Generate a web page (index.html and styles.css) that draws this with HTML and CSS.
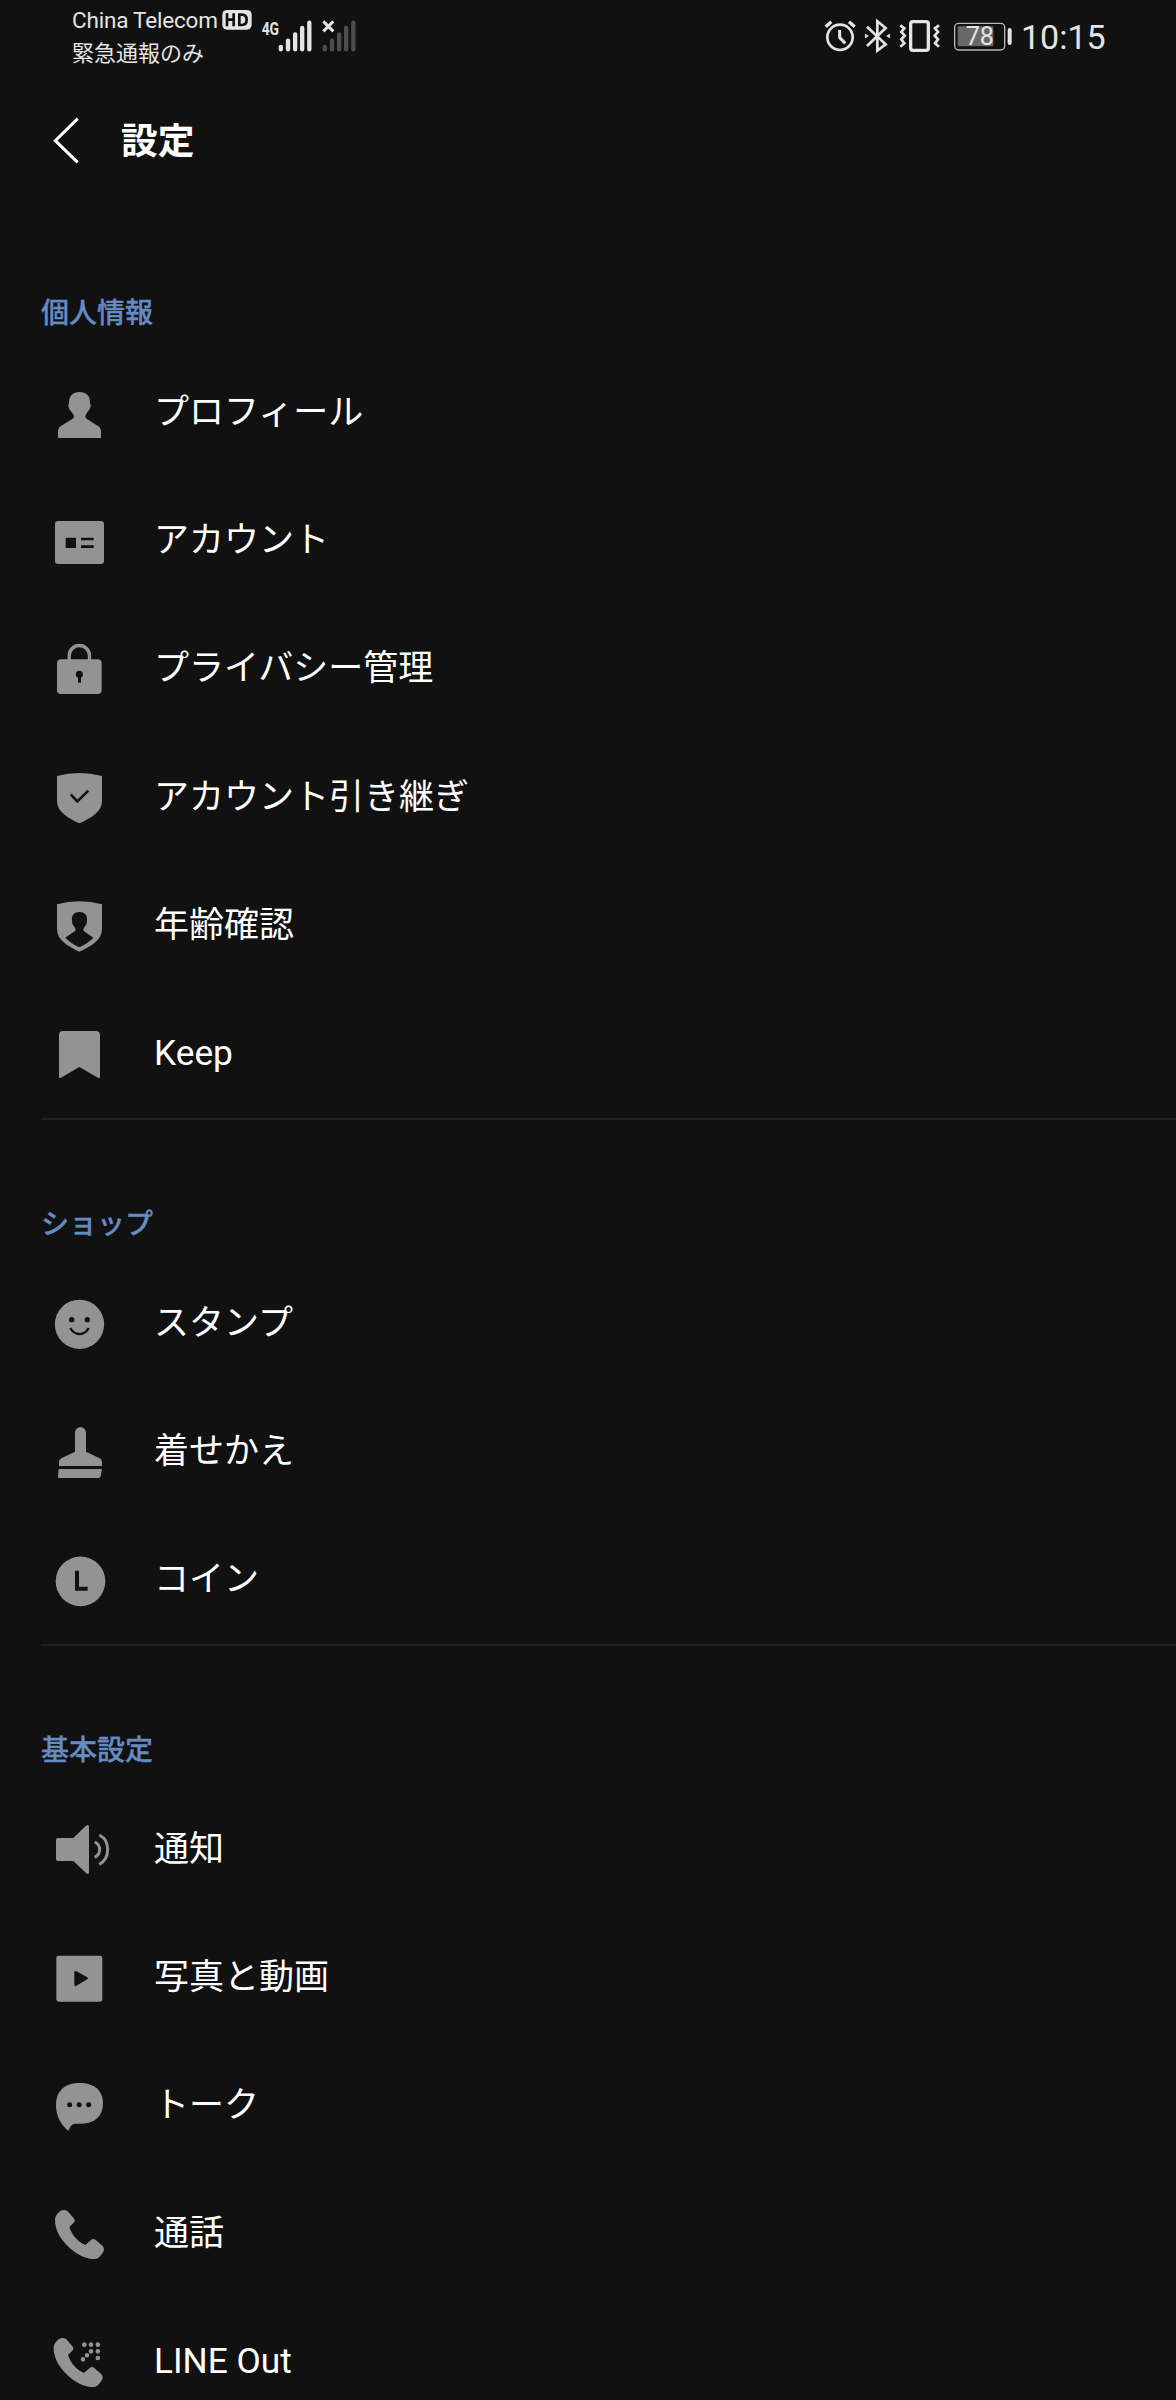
FILE: index.html
```html
<!DOCTYPE html>
<html lang="ja">
<head>
<meta charset="utf-8">
<title>設定</title>
<link rel="stylesheet" href="styles.css">
</head>
<body>
<div class="screen">
  <div class="status">
    <div class="carriers">
      <div class="carrier"><span class="carrier-name">China Telecom</span>
        <svg class="hd" viewBox="546 33 90 60"><rect x="547" y="33" width="88" height="59" rx="14" fill="#e4e4e4"/><path d="M561 43V82M581 43V82M561 62H581M598 47V78H606Q620 78 620 62.500Q620 47 606 47Z" fill="none" stroke="#111" stroke-width="8"/></svg>
      </div>
      <div class="carrier second">緊急通報のみ</div>
    </div>
    <svg class="signals" viewBox="660 0 300 180">
      <text class="net" x="665" y="104" textLength="52" lengthAdjust="spacingAndGlyphs">4G</text>
      <g stroke-width="13" stroke-linecap="round">
        <path d="M722.500 141V148M744 122V148M765.500 103V148M786.500 84V148M808 68V148" stroke="#e4e4e4"/>
        <path d="M854.500 141V148M876 122V148M897.500 103V148M918.500 84V148M940 68V148" stroke="#4d4d4d"/>
      </g>
      <path d="M850 64L880 94M880 64L850 94" stroke="#e4e4e4" stroke-width="9"/>
    </svg>
    <svg class="indicators" viewBox="72 0 567 180" fill="none" stroke="#e4e4e4">
      <g stroke-width="8">
        <circle cx="120" cy="112" r="38"/>
        <path d="M119 90V113L136 130" stroke-width="9"/>
        <path d="M77 80L94 65M147 65L164 80" stroke-width="10"/>
        <path d="M201 80L257 133L232 152V64L257 84L201 138" stroke-width="8"/>
        <path d="M196 102L205 108L196 114ZM269 102L260 108L269 114Z" fill="#e4e4e4" stroke-width="2"/>
        <rect x="332" y="65" width="53" height="86" rx="7" stroke-width="10"/>
        <path d="M301 76L313 85L304 96L314 107L304 118L313 130L301 140M417 76L405 85L414 96L404 107L414 118L405 130L417 140"/>
      </g>
      <rect x="464" y="70" width="150" height="80" rx="12" stroke-width="4" stroke="#b8b8b8"/>
      <rect x="473" y="79" width="107" height="60" rx="3" fill="#686868" stroke="none"/>
      <path d="M629 90V129" stroke-width="12" stroke-linecap="round"/>
      <text class="charge" x="497" y="135" textLength="85" lengthAdjust="spacingAndGlyphs">78</text>
    </svg>
    <time class="clock">10:15</time>
  </div>

  <header class="bar">
    <svg class="back" viewBox="0 333 180 180"><path d="M113 356L46 422L113 487" fill="none" stroke="#fff" stroke-width="9"/></svg>
    <h1 class="title">設定</h1>
  </header>

  <section class="group">
    <h2 class="heading">個人情報</h2>
    <div class="row">
      <svg class="icon" viewBox="60 306 180 180"><path d="M148 336C168 336 181 347 180 368Q184 376 180 385C177 394 168 399 166 408Q166 415 172 418L203 437Q213 443 213 454V474H84V454Q84 443 94 437L126 418Q132 415 132 408C130 399 120 394 117 385Q113 376 117 368C117 347 129 336 148 336Z"/></svg>
      <span class="label">プロフィール</span></div>
    <div class="row">
      <svg class="icon" viewBox="60 693 180 180"><rect x="75" y="723" width="147" height="129" rx="9"/><path class="cut" d="M107 773H138V804H107ZM153 773H191V781H153ZM153 796H191V804H153Z"/></svg>
      <span class="label">アカウント</span></div>
    <div class="row">
      <svg class="icon" viewBox="60 57 180 180"><rect x="81" y="118" width="134" height="104" rx="12"/><path class="line" d="M117.500 120V107A30.500 30.500 0 0 1 178.500 107V120" stroke-width="10"/><circle class="cut" cx="148" cy="163" r="10.500"/><path class="cut" d="M144 163H153V188H144Z"/></svg>
      <span class="label">プライバシー管理</span></div>
    <div class="row">
      <svg class="icon" viewBox="60 441 180 180"><path d="M81 468Q148 450 216 468V542C216 574 187 592 148 610C110 592 81 574 81 542Z"/><path class="cut-line" d="M122 523L142 544L175 512" stroke-width="8"/></svg>
      <span class="label">アカウント引き継ぎ</span></div>
    <div class="row">
      <svg class="icon" viewBox="60 825 180 180"><path d="M81 853Q148 835 216 853V927C216 959 187 977 148 995C110 977 81 959 81 927Z"/><path class="cut" d="M148 876C164 876 173 886 171 901Q172 913 165 919Q157 929 162 934L190 953Q174 970 148 982Q122 970 106 953L134 934Q140 929 132 919Q125 913 126 901C124 886 133 876 148 876Z"/></svg>
      <span class="label">年齢確認</span></div>
    <div class="row">
      <svg class="icon" viewBox="60 72 180 180"><path d="M99 93H198Q210 93 210 105V230Q210 236 204 233L148 201L93 233Q87 236 87 230V105Q87 93 99 93Z"/></svg>
      <span class="label latin">Keep</span></div>
  </section>

  <section class="group">
    <h2 class="heading">ショップ</h2>
    <div class="row">
      <svg class="icon" viewBox="60 39 180 180"><circle cx="148.500" cy="133" r="74"/><circle class="cut" cx="125" cy="119" r="8"/><circle class="cut" cx="172" cy="119" r="8"/><path class="cut-line" d="M121 144Q130 162 148.500 162T176 144" stroke-width="7"/></svg>
      <span class="label">スタンプ</span></div>
    <div class="row">
      <svg class="icon" viewBox="60 423 180 180"><path d="M135 458A16.500 17 0 0 1 168 458V515L209 535Q216 539 216 546V558H87V546Q87 539 94 535L135 515ZM86 567H216L212 589Q211 594 206 594H88Q84 594 84 590Z"/></svg>
      <span class="label">着せかえ</span></div>
    <div class="row">
      <svg class="icon" viewBox="60 810 180 180"><circle cx="151.500" cy="904" r="74.500"/><path class="cut-line" d="M141 872V926H173" stroke-width="12"/></svg>
      <span class="label">コイン</span></div>
  </section>

  <section class="group">
    <h2 class="heading">基本設定</h2>
    <div class="row">
      <svg class="icon" viewBox="60 297 180 180"><path d="M84 354H130L167 318Q177 311 177 320V457Q177 465 169 460L130 423H84Q78 423 78 417V360Q78 354 84 354Z"/><path class="line" d="M194 366Q209 373 209 388.500T194 412M208 345Q233 358 233 388.500T208 433" stroke-width="9"/></svg>
      <span class="label">通知</span></div>
    <div class="row">
      <svg class="icon" viewBox="60 681 180 180"><rect x="79" y="707" width="138" height="138" rx="7"/><path class="cut" d="M138 753L172 772Q176 775 172 778L138 798Q133 799 133 794V757Q133 752 138 753Z"/></svg>
      <span class="label">写真と動画</span></div>
    <div class="row">
      <svg class="icon" viewBox="60 48 180 180"><path d="M148 69C194 69 219 92 219 129C219 169 194 191 154 191H136Q122 192 117 209Q115 214 111 209C91 190 78 168 78 135C78 94 104 69 148 69Z"/><circle class="cut" cx="119" cy="134" r="7.500"/><circle class="cut" cx="147.500" cy="134" r="7.500"/><circle class="cut" cx="176" cy="134" r="7.500"/></svg>
      <span class="label">トーク</span></div>
    <div class="row">
      <svg class="icon" viewBox="60 432 180 180"><path id="handset" d="M91 453Q103 446 113 454L133 477Q137 483 131 488L118 501C126 526 143 545 166 555L182 541Q190 534 197 540L217 557Q225 566 220 575Q211 591 200 596C181 600 154 591 129 572C98 548 73 513 75 476Q78 463 91 453Z"/></svg>
      <span class="label">通話</span></div>
    <div class="row">
      <svg class="icon" viewBox="60 816 180 180"><use href="#handset" x="-4" y="384"/><path class="line dots" d="M163 854h0M183 854h0M203.500 854h0M183 874h0M203.500 874h0M203.500 894h0M171 886h0M159 898h0"/></svg>
      <span class="label latin">LINE Out</span></div>
  </section>
</div>
</body>
</html>
```
FILE: styles.css
```css
body {
  margin: 0;
  background: #111;
}

.screen {
  width: 1176px;
  height: 2400px;
  overflow: hidden;
  background: #111;
  color: #fff;
  font-family: Roboto, "Noto Sans CJK JP", sans-serif;
}

svg {
  display: block;
  flex: none;
}

.status {
  display: flex;
  height: 72px;
  color: #e4e4e4;
}

.carriers {
  width: 188px;
  padding: 4px 0 0 72px;
}

.carrier {
  display: flex;
  height: 32px;
  align-items: center;
  font-size: 22.5px;
  letter-spacing: -0.2px;
  white-space: nowrap;
}

.carrier-name {
  width: 150px;
}

.second {
  height: 30px;
  font-size: 22px;
  font-weight: 400;
  letter-spacing: 0;
}

.hd {
  width: 30px;
  height: 20px;
}

.signals {
  width: 100px;
  height: 60px;
}

.net {
  fill: #e4e4e4;
  font-size: 56px;
  font-weight: 700;
}

.indicators {
  width: 189px;
  height: 60px;
  margin-left: 464px;
}

.charge {
  fill: #e4e4e4;
  stroke: none;
  font-size: 76px;
}

.clock {
  margin-left: 8px;
  font-size: 34px;
  line-height: 74px;
}

.bar {
  display: flex;
  align-items: center;
  height: 137px;
  padding-left: 40px;
}

.back {
  width: 60px;
  height: 60px;
}

.title {
  margin: 0 0 0 21px;
  padding-top: 2px;
  font-size: 36.7px;
  font-weight: 700;
  line-height: 60px;
}

.group::after {
  content: "";
  display: block;
  height: 2px;
  margin-left: 41px;
  background: #202020;
}

.heading {
  box-sizing: border-box;
  height: 139.25px;
  margin: 0;
  padding: 82px 0 0 41px;
  color: #658cc2;
  font-size: 28px;
  font-weight: 500;
  line-height: 46px;
  -webkit-text-stroke: 0.3px currentColor;
}

.row {
  display: flex;
  align-items: center;
  height: 128.25px;
  padding-left: 50px;
}

.icon {
  width: 60px;
  height: 60px;
  fill: #939393;
}

.icon .cut {
  fill: #111;
}

.icon .line {
  fill: none;
  stroke: #939393;
}

.icon .cut-line {
  fill: none;
  stroke: #111;
}

.icon .dots {
  stroke-width: 14px;
  stroke-linecap: round;
}

.label {
  margin-left: 44px;
  padding-top: 0.8px;
  font-size: 35px;
  line-height: 60px;
  white-space: nowrap;
}

.latin {
  padding: 0 0 1.8px;
  font-size: 35.28px;
}
```
